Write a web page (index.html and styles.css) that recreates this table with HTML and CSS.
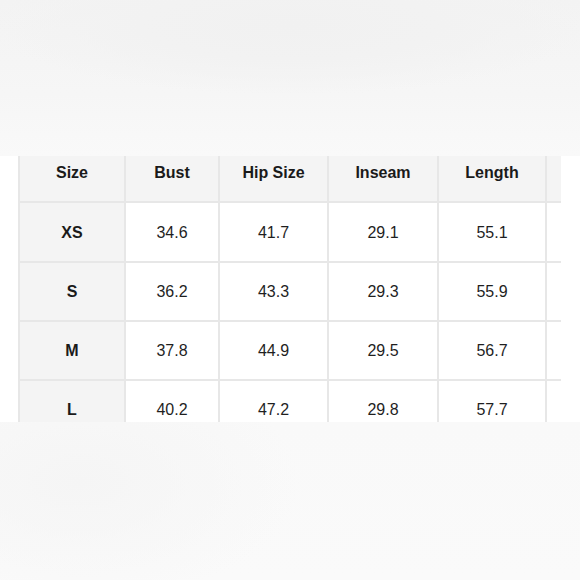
FILE: index.html
```html
<!DOCTYPE html>
<html lang="en">
<head>
<meta charset="utf-8">
<title>Size Chart</title>
<link rel="stylesheet" href="styles.css">
</head>
<body>
<div class="page">
  <div class="band-top"></div>
  <div class="band-table">
    <div class="chart">
      <div class="cell head">Size</div>
      <div class="cell head">Bust</div>
      <div class="cell head">Hip Size</div>
      <div class="cell head">Inseam</div>
      <div class="cell head">Length</div>
      <div class="cell head"></div>

      <div class="cell size">XS</div>
      <div class="cell">34.6</div>
      <div class="cell">41.7</div>
      <div class="cell">29.1</div>
      <div class="cell">55.1</div>
      <div class="cell"></div>

      <div class="cell size">S</div>
      <div class="cell">36.2</div>
      <div class="cell">43.3</div>
      <div class="cell">29.3</div>
      <div class="cell">55.9</div>
      <div class="cell"></div>

      <div class="cell size">M</div>
      <div class="cell">37.8</div>
      <div class="cell">44.9</div>
      <div class="cell">29.5</div>
      <div class="cell">56.7</div>
      <div class="cell"></div>

      <div class="cell size">L</div>
      <div class="cell">40.2</div>
      <div class="cell">47.2</div>
      <div class="cell">29.8</div>
      <div class="cell">57.7</div>
      <div class="cell"></div>
    </div>
  </div>
  <div class="band-bottom"></div>
</div>
</body>
</html>
```
FILE: styles.css
```css
html, body {
  margin: 0;
  padding: 0;
  background: #f8f8f8;
}

.page {
  width: 580px;
  height: 580px;
  overflow: hidden;
  display: flex;
  flex-direction: column;
}

.band-top {
  height: 156px;
  flex: none;
  background:
    radial-gradient(ellipse 300px 70px at 290px 25px, #f1f1f1 0%, #f2f2f2 50%, rgba(248,248,248,0) 100%),
    linear-gradient(to bottom, #f3f3f3 0%, #f6f6f6 60%, #f9f9f9 100%);
}

.band-table {
  height: 266px;
  flex: none;
  background: #ffffff;
  overflow: hidden;
  padding-left: 18px;
}

.chart {
  width: 541px;
  overflow: hidden;
  margin-top: -12px;
  display: grid;
  grid-template-columns: 106px 94px 109px 110px 108px 110px;
  grid-template-rows: 59px 60px 59px 59px 59px;
  border-left: 2px solid #e7e7e7;
  font-family: "Liberation Sans", Arial, sans-serif;
  font-size: 16px;
  color: #1f1f1f;
}

.cell {
  box-sizing: border-box;
  border-right: 2px solid #e7e7e7;
  border-bottom: 2px solid #e7e7e7;
  display: flex;
  align-items: center;
  justify-content: center;
  white-space: nowrap;
  background: #ffffff;
  padding-top: 1px;
}

.head {
  background: #f4f4f4;
  font-weight: bold;
  color: #1a1a1a;
}

.size {
  background: #f4f4f4;
  font-weight: bold;
  color: #1a1a1a;
}

.band-bottom {
  flex: 1;
  background:
    radial-gradient(ellipse 220px 120px at 80px 60px, #f5f5f5 0%, rgba(249,249,249,0) 100%),
    linear-gradient(to bottom, #f9f9f9 0%, #fafafa 100%);
}
```
